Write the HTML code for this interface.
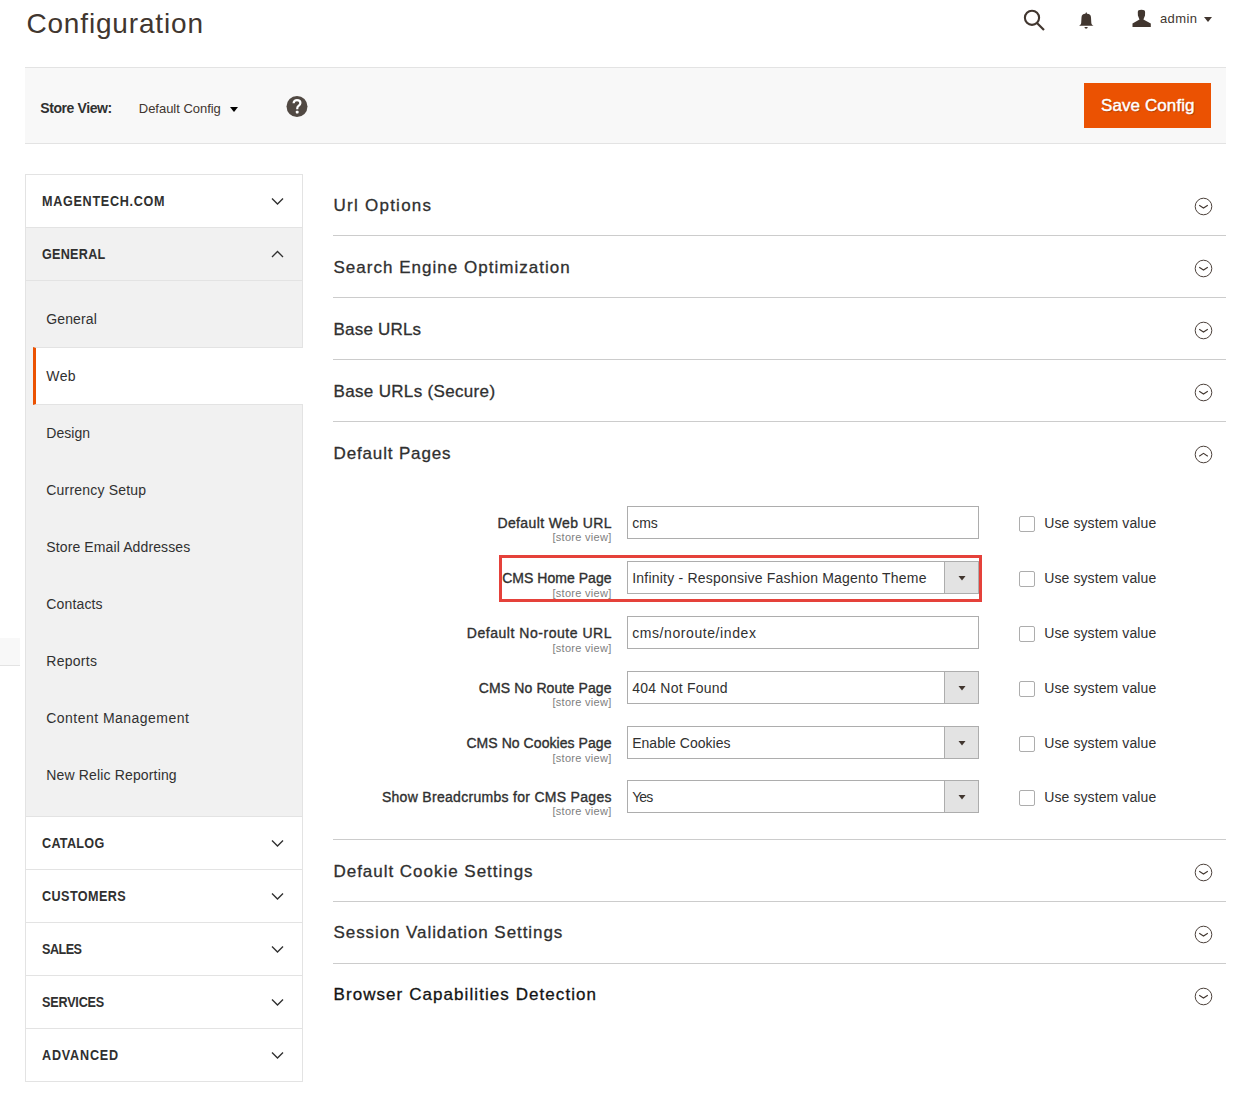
<!DOCTYPE html>
<html><head><meta charset="utf-8">
<style>
*{box-sizing:border-box;margin:0;padding:0}
html,body{width:1255px;height:1110px;overflow:hidden;background:#fff}
body{position:relative;font-family:"Liberation Sans",sans-serif;color:#303030;font-size:14px}
.a{position:absolute;white-space:nowrap}
.t{position:absolute;white-space:nowrap;line-height:1}
/* header */
#title{left:26px;top:9px;font-size:28px;color:#41362f}
/* actions bar */
#bar{position:absolute;left:25px;top:67px;width:1201px;height:77px;background:#f8f8f8;border-top:1px solid #e3e3e3;border-bottom:1px solid #e3e3e3}
#save{position:absolute;left:1084px;top:83px;width:127px;height:45px;background:#eb5202}
/* sidebar */
.nt{position:absolute;left:25px;width:278px;height:54px;border:1px solid #e3e3e3;background:#fff}
.nt.open{background:#f1f1f1}
.ntx{position:absolute;left:41px;font-weight:bold;font-size:14px;color:#303030;text-transform:uppercase}
.chev{position:absolute;left:271px;width:12px;height:8px}
#sub{position:absolute;left:25px;top:281px;width:278px;height:536px;background:#f1f1f1;border:1px solid #e3e3e3;border-top:0}
#web{position:absolute;left:33px;top:347px;width:270px;height:58px;background:#fff;border-top:1px solid #e3e3e3;border-bottom:1px solid #e3e3e3;border-left:3px solid #eb5202}
.si{position:absolute;left:46px;font-size:14px;color:#303030}
/* sections */
.sh{position:absolute;left:333px;font-size:17px;color:#41362f;font-weight:bold}
.sl{position:absolute;left:333px;width:893px;height:1px;background:#cccccc}
.ci{position:absolute;left:1194px;width:19px;height:19px}
/* form */
.lb{position:absolute;right:644px;font-size:14px;font-weight:bold;color:#303030;text-align:right}
.sv{position:absolute;right:644px;font-size:11px;color:#808080;text-align:right}
.inp{position:absolute;left:627px;width:352px;height:33px;border:1px solid #adadad;background:#fff}
.inp .v{position:absolute;left:4px;font-size:14px;color:#303030}
.inp .btn{position:absolute;right:0;top:0;width:34px;height:31px;background:#e3e3e3;border-left:1px solid #adadad}
.cb{position:absolute;left:1019px;width:16px;height:16px;border:1px solid #adadad;border-radius:2px;background:#fff}
.usv{position:absolute;left:1043px;font-size:14px;color:#303030}
#hl{position:absolute;left:499px;top:555px;width:483px;height:47px;border:3px solid #e5413a}
</style></head>
<body>

<!-- header icons -->
<svg class="a" style="left:1020px;top:6px" width="28" height="28" viewBox="0 0 28 28">
  <circle cx="12" cy="11.8" r="7.1" fill="none" stroke="#41362f" stroke-width="2.1"/>
  <line x1="17" y1="17" x2="24" y2="24" stroke="#41362f" stroke-width="2.2"/>
</svg>
<svg class="a" style="left:1076px;top:10px" width="20" height="22" viewBox="0 0 20 22">
  <path d="M10.2 2 L11.1 3.8 C13.6 4 14.9 5 15 7.5 L15.3 12.8 C15.4 14.4 16 15 17.6 15.7 L2.9 15.7 C4.5 15 5.1 14.4 5.2 12.8 L5.5 7.5 C5.6 5 6.9 4 9.3 3.8 Z" fill="#41362f"/>
  <path d="M8.4 17 L11.8 17 Q11.5 18.8 10.1 18.8 Q8.7 18.8 8.4 17Z" fill="#41362f"/>
</svg>
<svg class="a" style="left:1131px;top:9px" width="22" height="20" viewBox="0 0 22 20">
  <path d="M10.45 0.7 C13 0.7 14.1 1.4 14.1 3.2 L14 6.6 L12.4 10.4 L19.8 14.4 L19.8 17.9 L1.5 17.9 L1.5 14.4 L8.5 10.4 L6.9 6.6 L6.8 3.2 C6.8 1.4 7.9 0.7 10.45 0.7Z" fill="#41362f"/>
</svg>
<svg class="a" style="left:1204px;top:17px" width="8" height="5" viewBox="0 0 8 5"><path d="M0 0 L8 0 L4 5Z" fill="#41362f"/></svg>

<!-- actions bar -->
<div id="bar"></div>
<svg class="a" style="left:230px;top:107px" width="8" height="5" viewBox="0 0 8 5"><path d="M0 0 L8 0 L4 5Z" fill="#000"/></svg>
<svg class="a" style="left:286px;top:96px" width="22" height="22" viewBox="0 0 22 22">
  <circle cx="11" cy="10.5" r="10.5" fill="#514943"/>
  <path d="M7.6 7.3 C7.6 5.2 9.2 4.1 11 4.1 C13 4.1 14.4 5.3 14.4 6.9 C14.4 8.6 13.2 9.3 12.2 10.1 C11.4 10.7 11.2 11.3 11.2 13.2" fill="none" stroke="#fff" stroke-width="2.2"/><rect x="9.8" y="14.7" width="2.8" height="2.8" rx="0.8" fill="#fff"/>
</svg>
<div id="save"></div>

<!-- sidebar -->
<div class="nt" style="top:174px"></div>
<div class="nt open" style="top:227px"></div>
<div id="sub"></div>
<div id="web"></div>
<div class="nt" style="top:816px"></div>
<div class="nt" style="top:869px"></div>
<div class="nt" style="top:922px"></div>
<div class="nt" style="top:975px"></div>
<div class="nt" style="top:1028px"></div>

<div class="a" style="left:0;top:638px;width:20px;height:28px;background:#f8f8f8;border-bottom:1px solid #e3e3e3"></div>

<!-- sections -->
<div class="sl" style="top:235px"></div>
<div class="sl" style="top:297px"></div>
<div class="sl" style="top:359px"></div>
<div class="sl" style="top:421px"></div>

<div class="sl" style="top:839px"></div>
<div class="sl" style="top:901px"></div>
<div class="sl" style="top:963px"></div>

<!-- form rows -->
<div class="inp" style="top:506px"></div>
<div class="cb" style="top:516px"></div>

<div class="inp" style="top:561px"><div class="btn"><svg class="a" style="left:13px;top:14px" width="8" height="5" viewBox="0 0 8 5"><path d="M0.5 0 L7.5 0 L4 4.5Z" fill="#41362f"/></svg></div></div>
<div class="cb" style="top:571px"></div>

<div class="inp" style="top:616px"></div>
<div class="cb" style="top:626px"></div>

<div class="inp" style="top:671px"><div class="btn"><svg class="a" style="left:13px;top:14px" width="8" height="5" viewBox="0 0 8 5"><path d="M0.5 0 L7.5 0 L4 4.5Z" fill="#41362f"/></svg></div></div>
<div class="cb" style="top:681px"></div>

<div class="inp" style="top:726px"><div class="btn"><svg class="a" style="left:13px;top:14px" width="8" height="5" viewBox="0 0 8 5"><path d="M0.5 0 L7.5 0 L4 4.5Z" fill="#41362f"/></svg></div></div>
<div class="cb" style="top:736px"></div>

<div class="inp" style="top:780px"><div class="btn"><svg class="a" style="left:13px;top:14px" width="8" height="5" viewBox="0 0 8 5"><path d="M0.5 0 L7.5 0 L4 4.5Z" fill="#41362f"/></svg></div></div>
<div class="cb" style="top:790px"></div>

<svg class="a" style="left:271px;top:196.5px" width="13" height="9" viewBox="0 0 13 9"><path d="M1 1.5 L6.5 7 L12 1.5" fill="none" stroke="#303030" stroke-width="1.35"/></svg>
<svg class="a" style="left:271px;top:249.5px" width="13" height="9" viewBox="0 0 13 9"><path d="M1 7 L6.5 1.5 L12 7" fill="none" stroke="#303030" stroke-width="1.35"/></svg>
<svg class="a" style="left:271px;top:838.5px" width="13" height="9" viewBox="0 0 13 9"><path d="M1 1.5 L6.5 7 L12 1.5" fill="none" stroke="#303030" stroke-width="1.35"/></svg>
<svg class="a" style="left:271px;top:891.5px" width="13" height="9" viewBox="0 0 13 9"><path d="M1 1.5 L6.5 7 L12 1.5" fill="none" stroke="#303030" stroke-width="1.35"/></svg>
<svg class="a" style="left:271px;top:944.5px" width="13" height="9" viewBox="0 0 13 9"><path d="M1 1.5 L6.5 7 L12 1.5" fill="none" stroke="#303030" stroke-width="1.35"/></svg>
<svg class="a" style="left:271px;top:997.5px" width="13" height="9" viewBox="0 0 13 9"><path d="M1 1.5 L6.5 7 L12 1.5" fill="none" stroke="#303030" stroke-width="1.35"/></svg>
<svg class="a" style="left:271px;top:1050.5px" width="13" height="9" viewBox="0 0 13 9"><path d="M1 1.5 L6.5 7 L12 1.5" fill="none" stroke="#303030" stroke-width="1.35"/></svg>
<svg class="a" style="left:1193px;top:195.5px" width="21" height="21" viewBox="0 0 21 21"><circle cx="10.5" cy="10.5" r="8.3" fill="none" stroke="#41362f" stroke-width="0.95"/><path d="M6.2 9.2 L10.5 12 L14.8 9.2" fill="none" stroke="#41362f" stroke-width="1.05"/></svg>
<svg class="a" style="left:1193px;top:257.5px" width="21" height="21" viewBox="0 0 21 21"><circle cx="10.5" cy="10.5" r="8.3" fill="none" stroke="#41362f" stroke-width="0.95"/><path d="M6.2 9.2 L10.5 12 L14.8 9.2" fill="none" stroke="#41362f" stroke-width="1.05"/></svg>
<svg class="a" style="left:1193px;top:319.5px" width="21" height="21" viewBox="0 0 21 21"><circle cx="10.5" cy="10.5" r="8.3" fill="none" stroke="#41362f" stroke-width="0.95"/><path d="M6.2 9.2 L10.5 12 L14.8 9.2" fill="none" stroke="#41362f" stroke-width="1.05"/></svg>
<svg class="a" style="left:1193px;top:381.5px" width="21" height="21" viewBox="0 0 21 21"><circle cx="10.5" cy="10.5" r="8.3" fill="none" stroke="#41362f" stroke-width="0.95"/><path d="M6.2 9.2 L10.5 12 L14.8 9.2" fill="none" stroke="#41362f" stroke-width="1.05"/></svg>
<svg class="a" style="left:1193px;top:443.5px" width="21" height="21" viewBox="0 0 21 21"><circle cx="10.5" cy="10.5" r="8.3" fill="none" stroke="#41362f" stroke-width="0.95"/><path d="M6.2 12.2 L10.5 9.4 L14.8 12.2" fill="none" stroke="#41362f" stroke-width="1.05"/></svg>
<svg class="a" style="left:1193px;top:861.5px" width="21" height="21" viewBox="0 0 21 21"><circle cx="10.5" cy="10.5" r="8.3" fill="none" stroke="#41362f" stroke-width="0.95"/><path d="M6.2 9.2 L10.5 12 L14.8 9.2" fill="none" stroke="#41362f" stroke-width="1.05"/></svg>
<svg class="a" style="left:1193px;top:923.5px" width="21" height="21" viewBox="0 0 21 21"><circle cx="10.5" cy="10.5" r="8.3" fill="none" stroke="#41362f" stroke-width="0.95"/><path d="M6.2 9.2 L10.5 12 L14.8 9.2" fill="none" stroke="#41362f" stroke-width="1.05"/></svg>
<svg class="a" style="left:1193px;top:985.5px" width="21" height="21" viewBox="0 0 21 21"><circle cx="10.5" cy="10.5" r="8.3" fill="none" stroke="#41362f" stroke-width="0.95"/><path d="M6.2 9.2 L10.5 12 L14.8 9.2" fill="none" stroke="#41362f" stroke-width="1.05"/></svg>
<div id="hl"></div>
<div class="t" style="font-size:28px;font-weight:400;color:#41362f;top:10.30px;letter-spacing:0.840px;left:26.40px;">Configuration</div>
<div class="t" style="font-size:13px;font-weight:400;color:#41362f;top:12.00px;letter-spacing:0.380px;left:1160.00px;">admin</div>
<div class="t" style="font-size:14px;font-weight:700;color:#303030;top:100.85px;letter-spacing:-0.398px;left:40.20px;">Store View:</div>
<div class="t" style="font-size:13px;font-weight:400;color:#41362f;top:102.00px;letter-spacing:-0.027px;left:138.80px;">Default Config</div>
<div class="t" style="font-size:17px;font-weight:400;-webkit-text-stroke:0.42px #fff;color:#fff;top:96.61px;letter-spacing:0.094px;left:1101.00px;text-shadow:1px 1px 1px rgba(0,0,0,0.3);">Save Config</div>
<div class="t" style="font-size:14px;font-weight:700;color:#303030;top:194.15px;letter-spacing:0.778px;left:41.80px;transform:scaleX(0.9);transform-origin:0 0;">MAGENTECH.COM</div>
<div class="t" style="font-size:14px;font-weight:700;color:#303030;top:247.15px;letter-spacing:0.296px;left:41.80px;transform:scaleX(0.9);transform-origin:0 0;">GENERAL</div>
<div class="t" style="font-size:14px;font-weight:700;color:#303030;top:836.15px;letter-spacing:0.330px;left:41.80px;transform:scaleX(0.9);transform-origin:0 0;">CATALOG</div>
<div class="t" style="font-size:14px;font-weight:700;color:#303030;top:889.15px;letter-spacing:0.476px;left:41.80px;transform:scaleX(0.9);transform-origin:0 0;">CUSTOMERS</div>
<div class="t" style="font-size:14px;font-weight:700;color:#303030;top:942.15px;letter-spacing:-0.559px;left:41.80px;transform:scaleX(0.9);transform-origin:0 0;">SALES</div>
<div class="t" style="font-size:14px;font-weight:700;color:#303030;top:995.15px;letter-spacing:-0.204px;left:41.80px;transform:scaleX(0.9);transform-origin:0 0;">SERVICES</div>
<div class="t" style="font-size:14px;font-weight:700;color:#303030;top:1048.15px;letter-spacing:0.909px;left:41.80px;transform:scaleX(0.9);transform-origin:0 0;">ADVANCED</div>
<div class="t" style="font-size:14px;font-weight:400;color:#303030;top:312.15px;letter-spacing:0.118px;left:46.30px;">General</div>
<div class="t" style="font-size:14px;font-weight:400;color:#303030;top:369.15px;letter-spacing:0.387px;left:46.30px;">Web</div>
<div class="t" style="font-size:14px;font-weight:400;color:#303030;top:426.15px;letter-spacing:0.025px;left:46.30px;">Design</div>
<div class="t" style="font-size:14px;font-weight:400;color:#303030;top:483.15px;letter-spacing:0.195px;left:46.30px;">Currency Setup</div>
<div class="t" style="font-size:14px;font-weight:400;color:#303030;top:540.15px;letter-spacing:0.115px;left:46.30px;">Store Email Addresses</div>
<div class="t" style="font-size:14px;font-weight:400;color:#303030;top:597.15px;letter-spacing:0.153px;left:46.30px;">Contacts</div>
<div class="t" style="font-size:14px;font-weight:400;color:#303030;top:654.15px;letter-spacing:0.265px;left:46.30px;">Reports</div>
<div class="t" style="font-size:14px;font-weight:400;color:#303030;top:711.15px;letter-spacing:0.463px;left:46.30px;">Content Management</div>
<div class="t" style="font-size:14px;font-weight:400;color:#303030;top:768.15px;letter-spacing:0.151px;left:46.30px;">New Relic Reporting</div>
<div class="t" style="font-size:17px;font-weight:400;-webkit-text-stroke:0.30px #303030;color:#303030;top:196.61px;letter-spacing:1.253px;left:333.50px;">Url Options</div>
<div class="t" style="font-size:17px;font-weight:400;-webkit-text-stroke:0.30px #303030;color:#303030;top:258.91px;letter-spacing:1.017px;left:333.50px;">Search Engine Optimization</div>
<div class="t" style="font-size:17px;font-weight:400;-webkit-text-stroke:0.30px #303030;color:#303030;top:320.91px;letter-spacing:0.197px;left:333.50px;">Base URLs</div>
<div class="t" style="font-size:17px;font-weight:400;-webkit-text-stroke:0.30px #303030;color:#303030;top:382.61px;letter-spacing:0.333px;left:333.50px;">Base URLs (Secure)</div>
<div class="t" style="font-size:17px;font-weight:400;-webkit-text-stroke:0.30px #303030;color:#303030;top:444.61px;letter-spacing:0.855px;left:333.50px;">Default Pages</div>
<div class="t" style="font-size:17px;font-weight:400;-webkit-text-stroke:0.30px #303030;color:#303030;top:862.81px;letter-spacing:0.973px;left:333.50px;">Default Cookie Settings</div>
<div class="t" style="font-size:17px;font-weight:400;-webkit-text-stroke:0.30px #303030;color:#303030;top:924.41px;letter-spacing:0.923px;left:333.50px;">Session Validation Settings</div>
<div class="t" style="font-size:17px;font-weight:400;-webkit-text-stroke:0.30px #141414;color:#141414;top:986.21px;letter-spacing:1.071px;left:333.50px;">Browser Capabilities Detection</div>
<div class="t" style="font-size:14px;font-weight:400;-webkit-text-stroke:0.35px #303030;color:#303030;top:515.85px;letter-spacing:0.388px;right:643.11px;">Default Web URL</div>
<div class="t" style="font-size:11px;font-weight:400;color:#808080;top:532.39px;letter-spacing:0.294px;right:643.41px;">[store view]</div>
<div class="t" style="font-size:14px;font-weight:400;color:#303030;top:515.85px;letter-spacing:-0.026px;left:632.20px;">cms</div>
<div class="t" style="font-size:14px;font-weight:400;color:#303030;top:515.85px;letter-spacing:0.102px;left:1044.20px;">Use system value</div>
<div class="t" style="font-size:14px;font-weight:400;-webkit-text-stroke:0.35px #303030;color:#303030;top:571.05px;letter-spacing:0.032px;right:643.47px;">CMS Home Page</div>
<div class="t" style="font-size:11px;font-weight:400;color:#808080;top:587.59px;letter-spacing:0.294px;right:643.41px;">[store view]</div>
<div class="t" style="font-size:14px;font-weight:400;color:#303030;top:571.05px;letter-spacing:0.214px;left:632.20px;">Infinity - Responsive Fashion Magento Theme</div>
<div class="t" style="font-size:14px;font-weight:400;color:#303030;top:571.05px;letter-spacing:0.102px;left:1044.20px;">Use system value</div>
<div class="t" style="font-size:14px;font-weight:400;-webkit-text-stroke:0.35px #303030;color:#303030;top:626.15px;letter-spacing:0.531px;right:642.97px;">Default No-route URL</div>
<div class="t" style="font-size:11px;font-weight:400;color:#808080;top:642.69px;letter-spacing:0.294px;right:643.41px;">[store view]</div>
<div class="t" style="font-size:14px;font-weight:400;color:#303030;top:626.15px;letter-spacing:0.582px;left:632.20px;">cms/noroute/index</div>
<div class="t" style="font-size:14px;font-weight:400;color:#303030;top:626.15px;letter-spacing:0.102px;left:1044.20px;">Use system value</div>
<div class="t" style="font-size:14px;font-weight:400;-webkit-text-stroke:0.35px #303030;color:#303030;top:680.95px;letter-spacing:0.130px;right:643.37px;">CMS No Route Page</div>
<div class="t" style="font-size:11px;font-weight:400;color:#808080;top:697.49px;letter-spacing:0.294px;right:643.41px;">[store view]</div>
<div class="t" style="font-size:14px;font-weight:400;color:#303030;top:680.95px;letter-spacing:0.225px;left:632.20px;">404 Not Found</div>
<div class="t" style="font-size:14px;font-weight:400;color:#303030;top:680.95px;letter-spacing:0.102px;left:1044.20px;">Use system value</div>
<div class="t" style="font-size:14px;font-weight:400;-webkit-text-stroke:0.35px #303030;color:#303030;top:736.15px;letter-spacing:0.065px;right:643.44px;">CMS No Cookies Page</div>
<div class="t" style="font-size:11px;font-weight:400;color:#808080;top:752.69px;letter-spacing:0.294px;right:643.41px;">[store view]</div>
<div class="t" style="font-size:14px;font-weight:400;color:#303030;top:736.15px;letter-spacing:0.020px;left:632.20px;">Enable Cookies</div>
<div class="t" style="font-size:14px;font-weight:400;color:#303030;top:736.15px;letter-spacing:0.102px;left:1044.20px;">Use system value</div>
<div class="t" style="font-size:14px;font-weight:400;-webkit-text-stroke:0.35px #303030;color:#303030;top:789.95px;letter-spacing:0.298px;right:643.20px;">Show Breadcrumbs for CMS Pages</div>
<div class="t" style="font-size:11px;font-weight:400;color:#808080;top:806.49px;letter-spacing:0.294px;right:643.41px;">[store view]</div>
<div class="t" style="font-size:14px;font-weight:400;color:#303030;top:789.95px;letter-spacing:-0.912px;left:632.20px;">Yes</div>
<div class="t" style="font-size:14px;font-weight:400;color:#303030;top:789.95px;letter-spacing:0.102px;left:1044.20px;">Use system value</div>
</body></html>
